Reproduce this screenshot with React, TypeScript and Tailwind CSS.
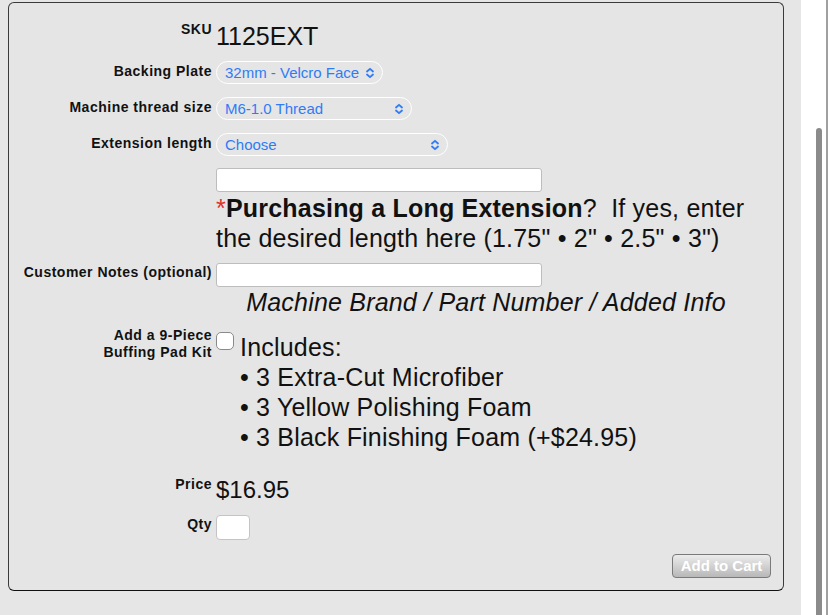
import React from "react";

function Chevron() {
  return (
    <svg width="10" height="12" viewBox="0 0 10 12" fill="none" stroke="#2f7cf6" strokeWidth="1.8" strokeLinecap="round" strokeLinejoin="round">
      <path d="M2 4.5 L5 1.8 L8 4.5" />
      <path d="M2 7.5 L5 10.2 L8 7.5" />
    </svg>
  );
}

function Select({ value, width }: { value: string; width: string }) {
  return (
    <div className={`flex h-[23px] ${width} items-center justify-between rounded-full border border-white pl-[8px] pr-[7px] text-[15px] text-[#2f7cf6]`}>
      <span className="leading-[20px]">{value}</span>
      <Chevron />
    </div>
  );
}

function Label({ children, className = "" }: { children: React.ReactNode; className?: string }) {
  return (
    <div className={`w-[203px] shrink-0 text-right text-[14px] font-bold leading-[16px] tracking-[0.5px] text-[#111] ${className}`}>
      {children}
    </div>
  );
}

export default function App() {
  return (
    <div className="flex h-[615px] w-[828px] overflow-hidden font-['Liberation_Sans',Arial,sans-serif] text-[#111]">
      <div className="h-[615px] w-[801px] shrink-0 bg-[#e6e6e6] pl-[8px] pt-[2px]">
        <div className="h-[589px] w-[776px] rounded-[6px] border border-[#3a3a3a] border-b-[#111] bg-[#e5e5e5] pt-[18px]">
          {/* SKU */}
          <div className="flex items-start">
            <Label>SKU</Label>
            <div className="ml-[4px] text-[25px] leading-[30px]">1125EXT</div>
          </div>

          {/* Backing Plate */}
          <div className="mt-[10px] flex items-start">
            <Label className="pt-[2px]">Backing Plate</Label>
            <div className="ml-[4px]">
              <Select value="32mm - Velcro Face" width="w-[167px]" />
            </div>
          </div>

          <div className="mt-[13px] flex items-start">
            <Label className="pt-[2px]">Machine thread size</Label>
            <div className="ml-[4px]">
              <Select value="M6-1.0 Thread" width="w-[196px]" />
            </div>
          </div>

          <div className="mt-[13px] flex items-start">
            <Label className="pt-[2px]">Extension length</Label>
            <div className="ml-[4px]">
              <Select value="Choose" width="w-[232px]" />
            </div>
          </div>

          {/* Long extension */}
          <div className="mt-[12px] flex items-start">
            <Label> </Label>
            <div className="ml-[4px] w-[540px]">
              <div className="h-[24px] w-[326px] rounded-[3px] border border-[#bdbdbd] bg-white" />
              <div className="mt-[1px] text-[25px] leading-[30px] tracking-[0.2px]">
                <span className="text-[#e0302f]">*</span>
                <span className="font-bold">Purchasing a Long Extension</span>?&nbsp; If yes, enter the desired length here (1.75" • 2" • 2.5" • 3")
              </div>
            </div>
          </div>

          {/* Customer notes */}
          <div className="mt-[10px] flex items-start">
            <Label className="pt-[1px]">Customer Notes (optional)</Label>
            <div className="ml-[4px] w-[540px]">
              <div className="h-[24px] w-[326px] rounded-[3px] border border-[#bdbdbd] bg-white" />
              <div className="text-center text-[25px] italic leading-[30px] tracking-[0.2px]">
                Machine Brand / Part Number / Added Info
              </div>
            </div>
          </div>

          {/* Kit */}
          <div className="mt-[10px] flex items-start">
            <Label className="leading-[17px]">
              Add a 9-Piece
              <br />
              Buffing Pad Kit
            </Label>
            <div className="ml-[4px] flex items-start pt-[5px]">
              <div className="h-[18px] w-[18px] rounded-[5px] border border-[#8a8a8a] bg-white" />
              <div className="ml-[6px] text-[25px] leading-[30px] tracking-[0.2px]">
                <div>Includes:</div>
                <div>• 3 Extra-Cut Microfiber</div>
                <div>• 3 Yellow Polishing Foam</div>
                <div>• 3 Black Finishing Foam (+$24.95)</div>
              </div>
            </div>
          </div>

          {/* Price */}
          <div className="mt-[23px] flex items-start">
            <Label className="pt-[1px]">Price</Label>
            <div className="ml-[4px] text-[24px] leading-[30px]">$16.95</div>
          </div>

          {/* Qty */}
          <div className="mt-[10px] flex items-start">
            <Label className="pt-[1px]">Qty</Label>
            <div className="ml-[4px] h-[25px] w-[34px] rounded-[4px] border border-[#c4c4c4] bg-white" />
          </div>

          {/* Button */}
          <div className="mt-[14px] flex justify-end pr-[12px]">
            <button className="h-[24px] w-[99px] rounded-[4px] border border-[#7a7a7a] bg-gradient-to-b from-[#ececec] to-[#b8b8b8] text-[15px] font-bold text-white">
              Add to Cart
            </button>
          </div>
        </div>
      </div>
      <div className="relative h-[615px] w-[27px] shrink-0 border-r-2 border-[#a0a0a0] bg-white">
        <div className="absolute left-[15px] top-[128px] h-[500px] w-[6px] rounded-full bg-[#8b8b8b]" />
      </div>
    </div>
  );
}
